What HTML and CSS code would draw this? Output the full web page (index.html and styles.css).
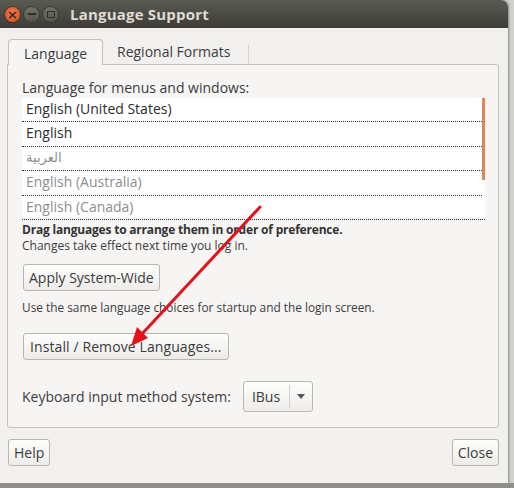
FILE: index.html
```html
<!DOCTYPE html>
<html>
<head>
<meta charset="utf-8">
<link rel="stylesheet" href="styles.css">
</head>
<body>
<div class="screen">
  <div class="window">
    <div class="titlebar">
      <div class="controls">
        <span class="wbtn close">×</span>
        <span class="wbtn min"><span class="dash"></span></span>
        <span class="wbtn max"><span class="sq"></span></span>
      </div>
      <div class="title">Language Support</div>
    </div>
    <div class="content">
      <div class="tabs">
        <div class="tab active">Language</div>
        <div class="tab">Regional Formats</div>
        <div class="tabsep"></div>
      </div>
      <div class="panel">
        <div class="label">Language for menus and windows:</div>
        <div class="list">
          <div class="rows">
            <div class="row dark">English (United States)</div>
            <div class="row dark">English</div>
            <div class="row light arabic">العربية</div>
            <div class="row light">English (Australia)</div>
            <div class="row light last">English (Canada)</div>
          </div>
          <div class="scrollbar"></div>
        </div>
        <div class="note"><div class="bold">Drag languages to arrange them in order of preference.</div><div>Changes take effect next time you log in.</div></div>
        <div class="btnrow first"><button class="btn">Apply System-Wide</button></div>
        <div class="note single">Use the same language choices for startup and the login screen.</div>
        <div class="btnrow second"><button class="btn wide">Install / Remove Languages...</button></div>
        <div class="kbd">
          <span class="klabel">Keyboard input method system:</span>
          <div class="combo"><span class="ctext">IBus</span><span class="csep"></span><span class="carrow"></span></div>
        </div>
      </div>
      <div class="footer">
        <button class="btn small">Help</button>
        <button class="btn small">Close</button>
      </div>
    </div>
  </div>
  <div class="below"></div>
  <svg class="arrow" width="514" height="488" viewBox="0 0 514 488">
    <line x1="260" y1="207" x2="141" y2="335" stroke="#e3121c" stroke-width="3" stroke-linecap="round"/>
    <polygon points="131,346 148,338 137,327" fill="#e3121c"/>
  </svg>
</div>
</body>
</html>
```

FILE: styles.css
```css
* { box-sizing: border-box; }
html, body { margin: 0; padding: 0; }
body {
  width: 514px;
  height: 488px;
  overflow: hidden;
  background: #d0d0ce;
  font-family: "Open Sans", "Noto Sans", sans-serif;
  color: #3c3c3c;
}
.screen {
  position: relative;
  width: 514px;
  height: 488px;
}
.window {
  width: 508px;
  height: 483px;
  background: #f1f0ee;
  border-top-right-radius: 7px;
  overflow: hidden;
  box-shadow: 1px 0 2px rgba(0,0,0,0.35);
}
.titlebar {
  height: 28px;
  background: linear-gradient(#5a5a53, #3d3c37);
  display: flex;
  align-items: center;
  padding-left: 4px;
}
.controls {
  display: flex;
  gap: 2px;
  width: 66px;
}
.wbtn {
  width: 17px;
  height: 17px;
  border-radius: 50%;
  display: flex;
  align-items: center;
  justify-content: center;
  background: linear-gradient(#727269, #55554f);
  border: 1px solid #3a3a35;
}
.wbtn.close {
  background: radial-gradient(circle at 50% 40%, #f27a52, #dd4814);
  color: #3c2a22;
  font-size: 13px;
  line-height: 1;
  font-family: "DejaVu Sans", sans-serif;
  font-weight: bold;
}
.dash { width: 8px; height: 2px; background: #2f2f2b; }
.sq { width: 8px; height: 7px; border: 1.5px solid #2f2f2b; }
.title {
  color: #dfdbd2;
  font-weight: bold;
  font-size: 15px;
  letter-spacing: 0.2px;
}
.content {
  padding: 10px 9px 0 7px;
}
.tabs {
  display: flex;
  align-items: flex-end;
  height: 26px;
}
.tab {
  font-size: 14px;
  height: 26px;
  line-height: 27px;
  padding: 0 15px;
}
.tab.active {
  background: #f6f5f4;
  border: 1px solid #c4c1bc;
  border-bottom: none;
  border-top-left-radius: 4px;
  border-top-right-radius: 4px;
  width: 95px;
  margin-left: 1px;
  position: relative;
  top: 1px;
  z-index: 1;
}
.tab + .tab { padding-left: 14px; width: 145px; }
.tabsep {
  width: 1px;
  height: 19px;
  background: #d6d3cf;
}
.panel {
  height: 364px;
  background: #f6f5f4;
  border: 1px solid #c4c1bc;
  border-radius: 0 3px 3px 3px;
  padding: 13px 14px 0 14px;
}
.label {
  font-size: 14px;
  line-height: 20px;
  height: 20px;
}
.list {
  display: flex;
  background: #fff;
  height: 119px;
  width: 463px;
}
.rows { flex: 1; }
.row {
  font-size: 14px;
  height: 24.4px;
  line-height: 21px;
  padding-left: 4px;
  border-bottom: 1px dotted #2a2a2a;
}
.row.last { margin-right: -3px; }
.row.dark { color: #2c2c2c; }
.row.light { color: #8e8e8e; }
.row.arabic { font-family: "DejaVu Sans", "Noto Sans", sans-serif; font-size: 13px; }
.scrollbar {
  width: 3px;
  height: 82px;
  background: #d9875b;
}
.note {
  font-size: 12px;
  line-height: 15.5px;
  margin-top: 5px;
}
.note .bold { font-weight: bold; color: #333; letter-spacing: -0.2px; }
.note.single { margin-top: 9px; font-size: 11.85px; }
.btnrow.first { margin-top: 11px; }
.btnrow.second { margin-top: 17px; }
.btn {
  font-family: "Open Sans", "Noto Sans", sans-serif;
  font-size: 14px;
  color: #3c3c3c;
  height: 27px;
  padding: 0 5px;
  border: 1px solid #b9b5af;
  border-radius: 3px;
  background: linear-gradient(#fdfdfc, #edece9);
  margin: 0 0 0 1px;
}
.btn.wide { padding: 0 6px; letter-spacing: 0.1px; }
.kbd {
  display: flex;
  align-items: center;
  margin-top: 21px;
  gap: 12px;
}
.klabel { font-size: 14px; }
.combo {
  display: flex;
  align-items: center;
  width: 70px;
  height: 31px;
  border: 1px solid #bcb8b2;
  border-radius: 3px;
  background: linear-gradient(#fdfdfc, #eeedeb);
  padding-left: 8px;
  font-size: 14px;
}
.ctext { width: 37px; }
.csep { width: 1px; height: 23px; background: #d2cfca; }
.carrow {
  margin-left: 7px;
  width: 0; height: 0;
  border-left: 4px solid transparent;
  border-right: 4px solid transparent;
  border-top: 5px solid #555;
}
.footer {
  display: flex;
  justify-content: space-between;
  margin-top: 11px;
  padding-left: 1px;
}
.btn.small { padding: 0 5px; margin: 0; }
.below {
  height: 5px;
  background: #8f8e8a;
  width: 514px;
}
.arrow {
  position: absolute;
  left: 0;
  top: 0;
}
```
